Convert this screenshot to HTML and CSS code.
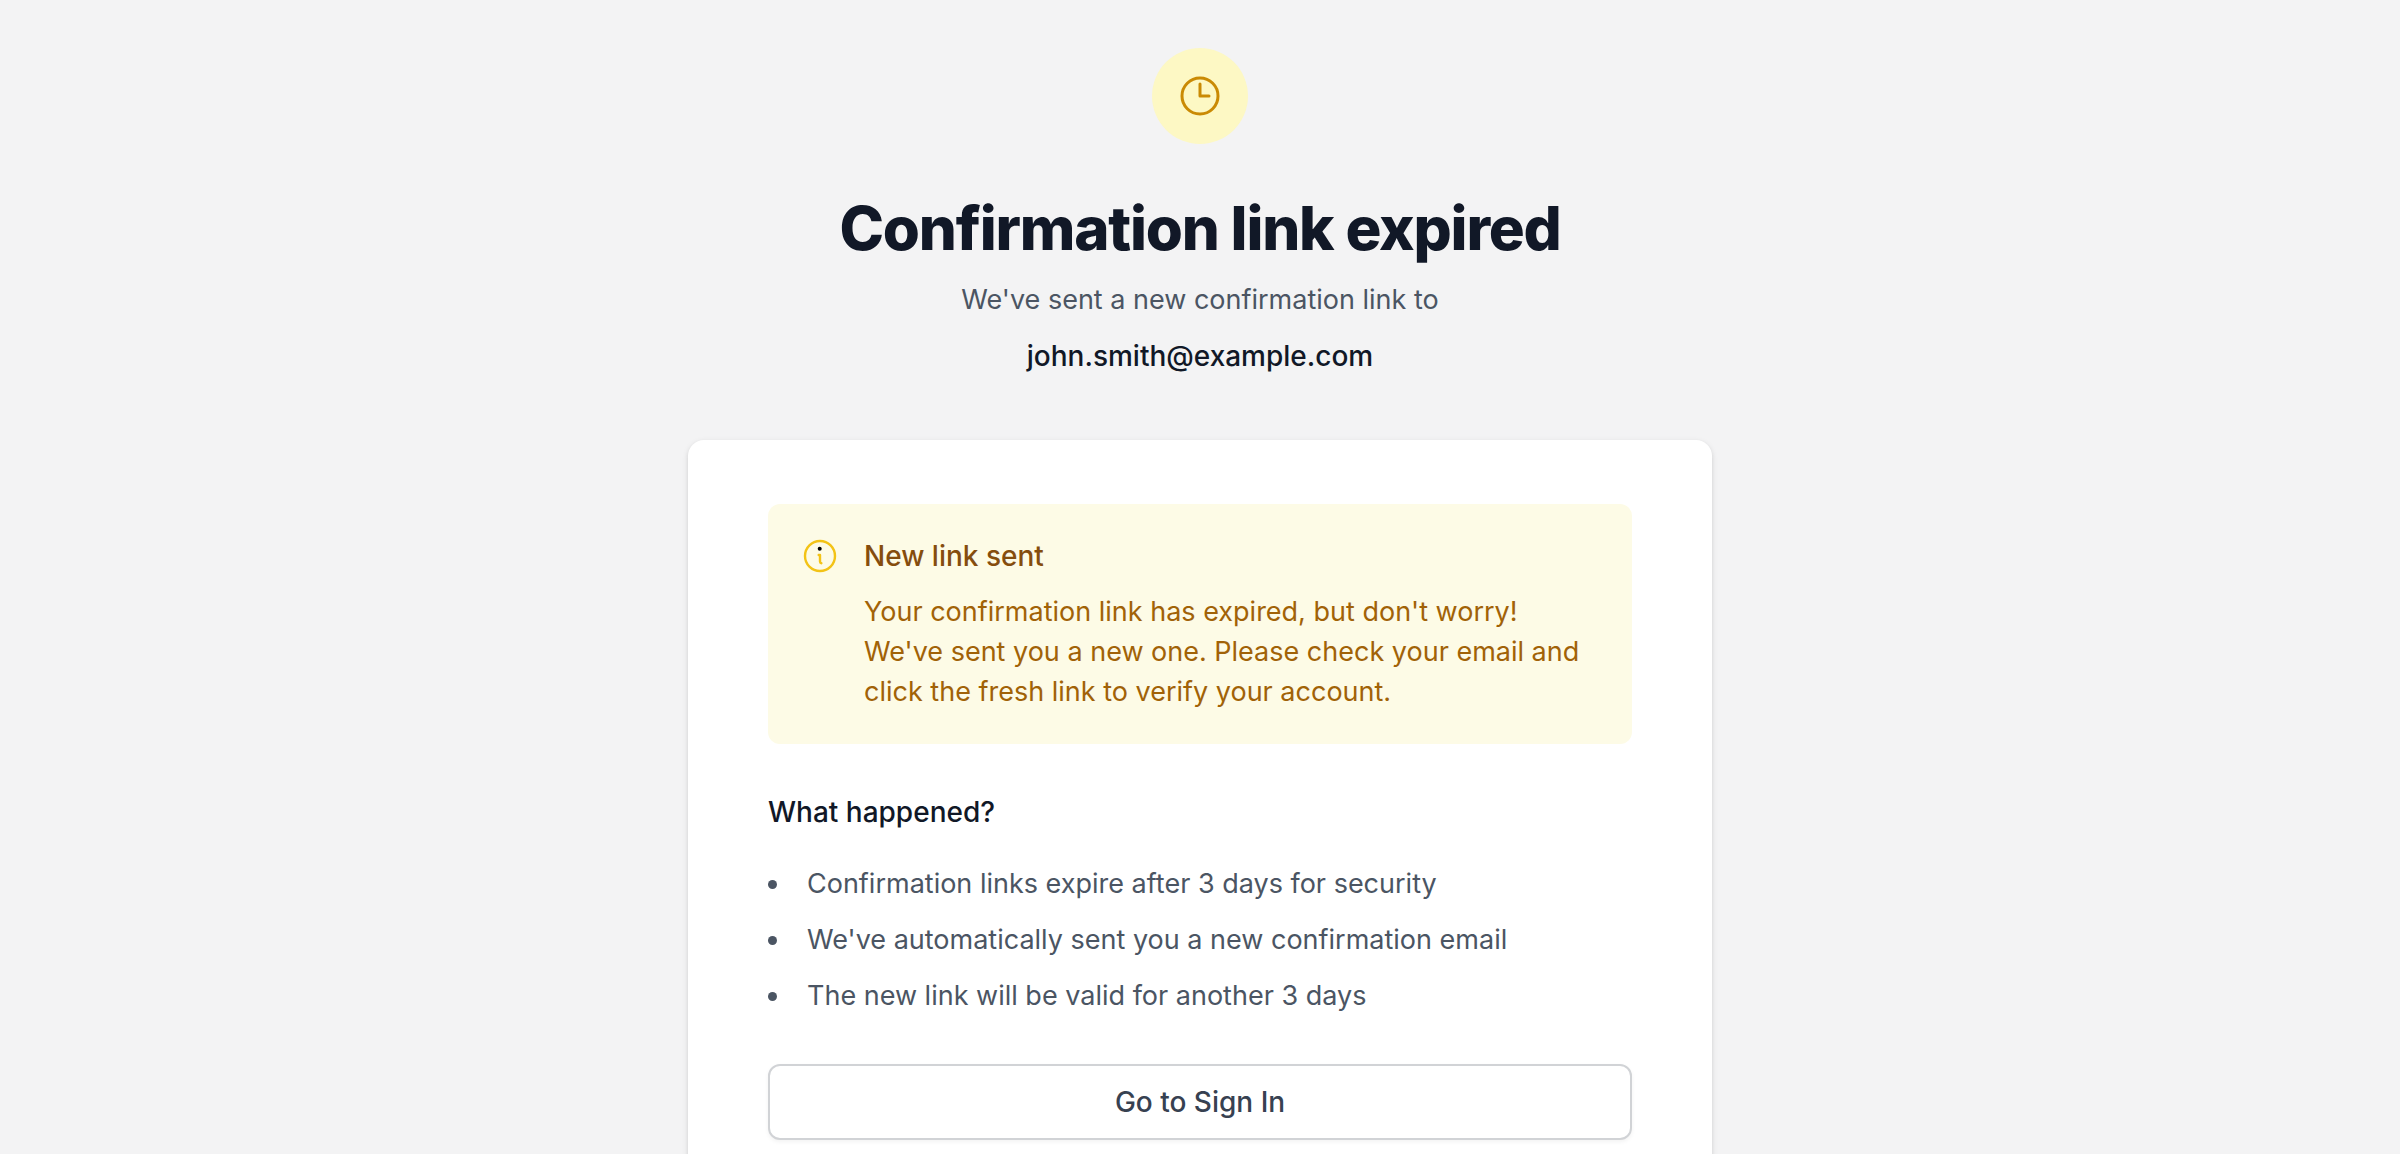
FILE: index.html
```html
<!DOCTYPE html>
<html lang="en">
<head>
<meta charset="utf-8">
<meta name="viewport" content="width=device-width, initial-scale=1">
<title>Confirmation link expired</title>
<link rel="stylesheet" href="styles.css">
</head>
<body>
<main class="page">
  <header class="intro">
    <span class="badge">
      <svg class="badge-icon" viewBox="0 0 24 24" fill="none" stroke="currentColor" stroke-width="1.5" stroke-linecap="round" stroke-linejoin="round" aria-hidden="true">
        <path d="M12 6v6h4.5m4.5 0a9 9 0 1 1-18 0 9 9 0 0 1 18 0z"/>
      </svg>
    </span>
    <h1 class="title">Confirmation link expired</h1>
    <p class="subtitle">We've sent a new confirmation link to</p>
    <p class="email">john.smith@example.com</p>
  </header>
  <section class="card">
    <div class="notice">
      <svg class="notice-icon" viewBox="0 0 40 40" fill="none" stroke="currentColor" stroke-width="2.4" stroke-linecap="round" stroke-linejoin="round" aria-hidden="true">
        <circle cx="20" cy="20" r="15"/>
        <path d="M18.7 19h1.3v6.6q0 1.4 1.4 1.6"/>
        <circle class="notice-dot" cx="19.7" cy="12.8" r="2"/>
      </svg>
      <div class="notice-body">
        <h2 class="notice-title">New link sent</h2>
        <p class="notice-text">Your confirmation link has expired, but don't worry! We've sent you a new one. Please check your email and click the fresh link to verify your account.</p>
      </div>
    </div>
    <div class="reasons">
      <h2 class="reasons-title">What happened?</h2>
      <ul class="reasons-list">
        <li>Confirmation links expire after 3 days for security</li>
        <li>We've automatically sent you a new confirmation email</li>
        <li>The new link will be valid for another 3 days</li>
      </ul>
    </div>
    <button class="button" type="button">Go to Sign In</button>
  </section>
</main>
</body>
</html>
```

FILE: styles.css
```css
*,
*::before {
  box-sizing: border-box;
}

body,
h1,
h2,
p,
ul {
  margin: 0;
  padding: 0;
}

body {
  background: #f3f3f4;
  color: #111827;
  font-family: Inter, "Liberation Sans", sans-serif;
  font-size: 27px;
  line-height: 40px;
}

.page {
  display: flex;
  flex-direction: column;
  align-items: center;
  gap: 64px;
  min-height: 100vh;
  padding: 48px 32px;
}

.intro {
  display: flex;
  flex-direction: column;
  align-items: center;
  gap: 16px;
  text-align: center;
}

.badge {
  display: flex;
  align-items: center;
  justify-content: center;
  width: 96px;
  height: 96px;
  margin-bottom: 32px;
  border-radius: 50%;
  background: #fdf8c4;
  color: #ca8a04;
}

.badge-icon {
  width: 48px;
  height: 48px;
}

.title {
  font-size: 60px;
  font-weight: 800;
  line-height: 72px;
  letter-spacing: -0.02em;
}

.subtitle {
  color: #4b5563;
}

.email {
  font-size: 28px;
  font-weight: 500;
}

.card {
  display: flex;
  flex-direction: column;
  gap: 48px;
  width: 100%;
  max-width: 1024px;
  padding: 64px 80px;
  border-radius: 16px;
  background: #fff;
  box-shadow: 0 2px 6px rgba(0, 0, 0, 0.1), 0 2px 4px rgba(0, 0, 0, 0.06);
}

.notice {
  display: flex;
  gap: 24px;
  padding: 32px;
  border-radius: 12px;
  background: #fdfbe6;
}

.notice-icon {
  flex: none;
  width: 40px;
  height: 40px;
  color: #f3c316;
}

.notice-dot {
  fill: #000;
  stroke: none;
}

.notice-body {
  display: flex;
  flex-direction: column;
  gap: 16px;
}

.notice-title {
  color: #854d0e;
  font-size: 28px;
  font-weight: 500;
}

.notice-text {
  color: #a16207;
}

.reasons {
  display: flex;
  flex-direction: column;
  gap: 32px;
}

.reasons-title {
  font-size: 28px;
  font-weight: 500;
}

.reasons-list {
  display: flex;
  flex-direction: column;
  gap: 16px;
  color: #4b5563;
  list-style: none;
}

.reasons-list li {
  display: flex;
  align-items: center;
  gap: 30px;
}

.reasons-list li::before {
  content: "";
  flex: none;
  width: 9px;
  height: 9px;
  border-radius: 50%;
  background: #4b5563;
}

.button {
  width: 100%;
  padding: 16px 32px;
  border: 2px solid #d1d3d6;
  border-radius: 12px;
  background: #fff;
  color: #374151;
  font: inherit;
  font-size: 28px;
  font-weight: 500;
  box-shadow: 0 2px 4px rgba(0, 0, 0, 0.05);
}
```
